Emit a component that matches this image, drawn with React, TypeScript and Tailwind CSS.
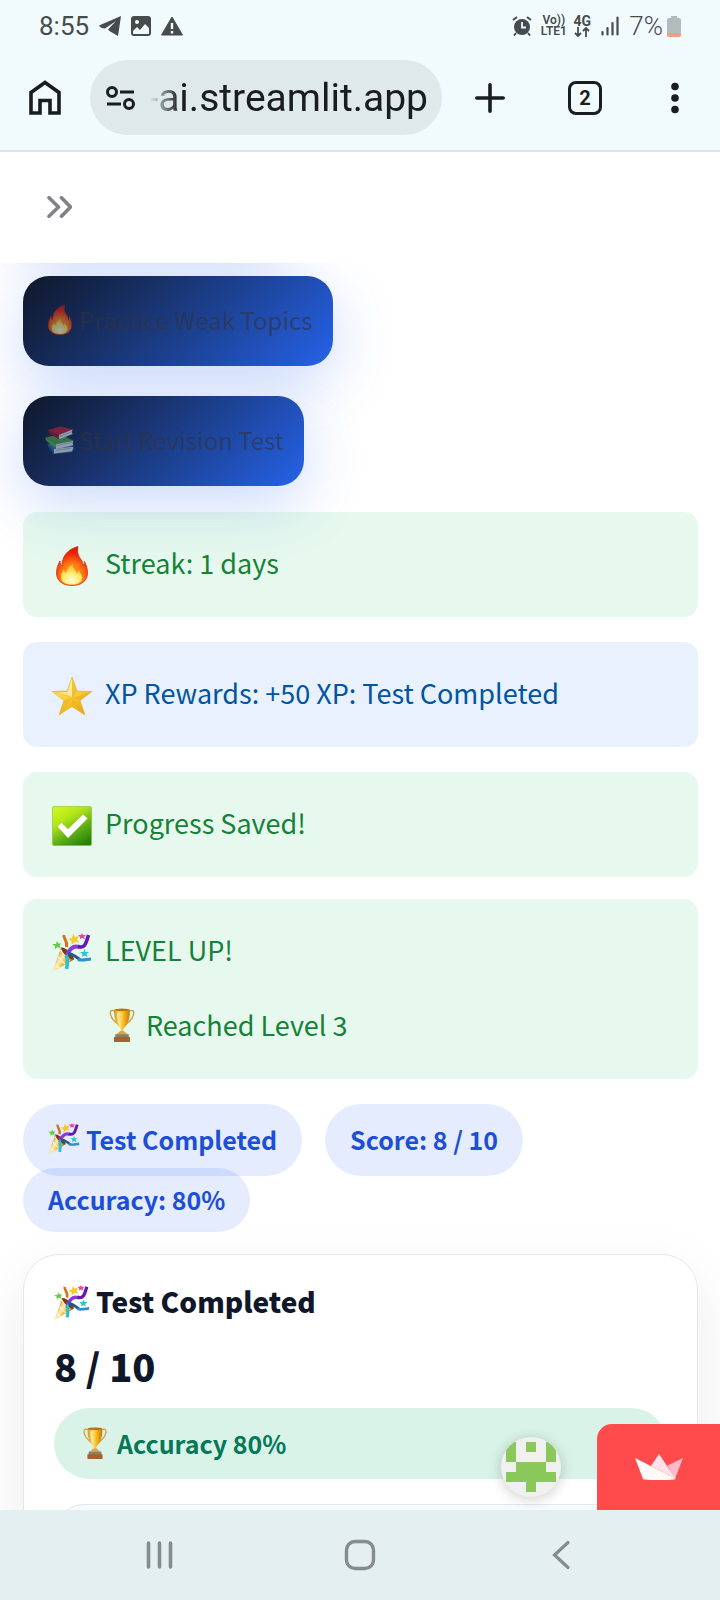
import type { ReactNode } from "react";

type IconProps = { className?: string };

/* emoji artwork */

function Fire({ className }: IconProps) {
  return (
    <svg viewBox="0 0 40 40" className={className} aria-hidden="true">
      <defs>
        <radialGradient id="fire-outer" cx="0.5" cy="0.8" r="0.8">
          <stop offset="0" stopColor="#ffb21f" />
          <stop offset="0.45" stopColor="#ff7a12" />
          <stop offset="0.75" stopColor="#ee2c0a" />
          <stop offset="1" stopColor="#cf1408" />
        </radialGradient>
        <radialGradient id="fire-inner" cx="0.5" cy="0.8" r="0.7">
          <stop offset="0" stopColor="#fffbd8" />
          <stop offset="0.5" stopColor="#ffed78" />
          <stop offset="1" stopColor="#ffc426" />
        </radialGradient>
      </defs>
      <path
        d="M26 .5c-1 6 0 9 3 13 1.500 2 2 4 2 6.500 1-1 1.500-3 1.500-4.500 2 4 3 8 3 11.500 0 8-6.500 12.500-15.500 12.500S4.500 35 4.500 27C4.500 22 6 19 8 15c0 3 1 4 2 5C10 10 16 3 26 .5z"
        fill="url(#fire-outer)"
        stroke="#d92a14"
        strokeWidth="0.8"
      />
      <path
        d="M21 18c-1 4 3 6 4 10 1-1 1-2 1-4 3 4 5 6 4 9-1 4-5 5.500-10 5.500S9 37 9 31c0-4 2-6 3-8 0 2 1 3 2 4 1-4 3-7 7-9z"
        fill="url(#fire-inner)"
      />
    </svg>
  );
}

function Books({ className }: IconProps) {
  return (
    <svg viewBox="0 0 40 40" className={className} aria-hidden="true">
      <path d="M3 25l24-2 12 8-3 5-25 3z" fill="#2d6fa8" />
      <path d="M12 32l26-3-2 6-24 3z" fill="#dfe6ee" />
      <path d="M3 25l9 11-1 3L4 29z" fill="#1d4f87" />
      <path d="M2 16l20-3 16 8-24 7z" fill="#4aa34a" />
      <path d="M14 26l24-5c-2 3-1 4 0 6l-23 5z" fill="#e8ecee" />
      <path d="M1 16l13 10c-1 3 0 4 1 6L3 22c-2-2-3-4-2-6z" fill="#5bb33f" />
      <path d="M4 7l16-5 18 4-19 8z" fill="#c51f38" />
      <path d="M19 13l18-7c-2 3-1 5 0 6l-18 7z" fill="#e8edf3" />
      <path d="M4 7l15 6c-2 3-1 4 0 6L7 12c-2-2-2-3-3-5z" fill="#a01430" />
      <path d="M20 15l16-6M15 28l21-5M14 34l21-3" stroke="#9ba9b8" strokeWidth="1" fill="none" />
    </svg>
  );
}

function Star({ className }: IconProps) {
  return (
    <svg viewBox="0 0 40 40" className={className} aria-hidden="true">
      <defs>
        <linearGradient id="star-fill" x1="0" y1="0" x2="0.6" y2="1">
          <stop offset="0" stopColor="#fff0a0" />
          <stop offset="0.5" stopColor="#fbd640" />
          <stop offset="1" stopColor="#e9a70c" />
        </linearGradient>
      </defs>
      <path
        d="M20 1l5 14 15 .5-12 9L33 39l-13-8.500L7 39l5-14.500-12-9L15 15z"
        fill="url(#star-fill)"
        stroke="#e0ac33"
        strokeWidth="0.6"
      />
      <path d="M20 1l5 14-5 7zM40 15.500l-12 9-8-2.500zM33 39l-13-8.500V22zM7 39l5-14.500 8-2.500zM0 15.500L15 15l5 7z" fill="#eeb31a" opacity="0.6" />
      <path d="M20 3l-4 13-12 .5 12 3 4 2z" fill="#fff6c4" opacity="0.65" />
    </svg>
  );
}

function CheckMark({ className }: IconProps) {
  return (
    <svg viewBox="0 0 40 40" className={className} aria-hidden="true">
      <defs>
        <linearGradient id="check-fill" x1="0.2" y1="0" x2="0.8" y2="1">
          <stop offset="0" stopColor="#ccf51c" />
          <stop offset="0.3" stopColor="#b2e51a" />
          <stop offset="0.65" stopColor="#5eae17" />
          <stop offset="1" stopColor="#24800c" />
        </linearGradient>
      </defs>
      <rect x="0.500" y="0.500" width="39" height="39" rx="1.500" fill="url(#check-fill)" stroke="#86bf2b" strokeWidth="0.6" />
      <path d="M5.500 20.500l4-3.500 6.500 6L31 8.500l4.500 4L16 32z" fill="#fff" />
    </svg>
  );
}

function Party({ className }: IconProps) {
  return (
    <svg viewBox="0 0 40 40" className={className} aria-hidden="true">
      <defs>
        <linearGradient id="party-cone" x1="0.1" y1="0.3" x2="0.8" y2="0.8">
          <stop offset="0" stopColor="#c98a24" />
          <stop offset="0.4" stopColor="#ffeeb4" />
          <stop offset="0.65" stopColor="#f0b53a" />
          <stop offset="1" stopColor="#8a4d10" />
        </linearGradient>
      </defs>
      <path d="M.5 39L9 14.500c3 1 11 8 13 12z" fill="url(#party-cone)" />
      <path d="M3.500 32l4 3M6 24l7 7M8.500 17l9 11" stroke="#fff6d8" strokeWidth="1.300" />
      <path d="M9 14.500c4-1 13 7 13 12-5 0-12-6-13-12z" fill="#7a3a12" />
      <path d="M12 2c-1 4 4 5 2.500 12" stroke="#d8701f" strokeWidth="3" fill="none" />
      <path d="M15 22C18 15 22 12.500 27 14" stroke="#8a3ad6" strokeWidth="4" fill="none" />
      <path d="M26 13.500C33 16 34 10 36.500 2" stroke="#6518b4" strokeWidth="3.600" fill="none" />
      <path d="M16 20.500c5 0 8 4 12 6" stroke="#175c96" strokeWidth="3" fill="none" />
      <path d="M26 26.500c4 1.500 8 0 13-.5" stroke="#2a92d0" strokeWidth="3" fill="none" />
      <path d="M14 22c2 4 2 8 .5 14" stroke="#2cc0cf" strokeWidth="3.600" fill="none" />
      <path d="M21 1l2 3 4-1-2 3.500 2 3-4-.5-3.500 2.500V8L16 6l4-1z" fill="#fbc827" />
      <path d="M30 0l1 2h3l-2 2 1 2-3-1-2 1v-2l-2-2h3z" fill="#e6489e" />
      <path d="M5 8l1.500 2.500h3l-2 2 1 3-3-1.500-2.500 2V13L0 11h4z" fill="#65cb3c" />
      <path d="M32.500 16l1 3H37l-2.500 2 1 3-3-1.500-2.500 1.500.5-3-2.500-2h3.500z" fill="#29c4cf" />
    </svg>
  );
}

function Trophy({ className }: IconProps) {
  return (
    <svg viewBox="0 0 40 40" className={className} aria-hidden="true">
      <defs>
        <linearGradient id="trophy-cup" x1="0" y1="0" x2="1" y2="0">
          <stop offset="0" stopColor="#d9920f" />
          <stop offset="0.35" stopColor="#ffe278" />
          <stop offset="0.6" stopColor="#f7b91f" />
          <stop offset="1" stopColor="#c2790a" />
        </linearGradient>
      </defs>
      <path
        d="M12 4C7 1 5 4 7 9c1 5 5 7 9 11M28 4c5-3 7 0 5 5-1 5-5 7-9 11"
        stroke="#d29a3a"
        strokeWidth="1.500"
        fill="none"
      />
      <path d="M11 2h18c1 9-2 17-6 21l-1.500 2v4h-3v-4L17 23C13 19 10 11 11 2z" fill="url(#trophy-cup)" />
      <ellipse cx="20" cy="2.200" rx="9" ry="1.600" fill="#b8740e" />
      <path d="M15 6c0 6 1 10 3 14" stroke="#fff3b5" strokeWidth="1.400" fill="none" />
      <path d="M18 27h4l6 5H12z" fill="#d5a64e" />
      <rect x="12" y="31" width="16" height="4" fill="#8a7f6c" />
      <rect x="10.500" y="34" width="19" height="6" rx="1" fill="#a8602f" />
    </svg>
  );
}

/* page parts */

function StatusBar() {
  return (
    <div className="flex h-[52px] items-center justify-between px-[39px] text-[#474b4b]">
      <div className="flex items-center gap-[10px]">
        <span className="text-[26px] leading-8">8:55</span>
        <svg viewBox="0 0 22 20" className="h-5 w-[22px]" fill="currentColor" aria-hidden="true">
          <path d="M22 0L0 9.500c1 2 3 3 6 3L17 5 9 13.500c1 1 2 2 4 3l6 3.500z" />
        </svg>
        <svg viewBox="0 0 20 20" className="size-5" aria-hidden="true">
          <rect width="20" height="20" rx="3" fill="currentColor" />
          <circle cx="6" cy="6" r="2" fill="#f1fafd" />
          <path d="M2 15l4-4 3 3 5-6 4 4v5c0 .8-.5 1-1 1H3c-.7 0-1-.4-1-1z" fill="#f1fafd" />
        </svg>
        <svg viewBox="0 0 22 20" className="h-5 w-[22px]" aria-hidden="true">
          <path d="M11 1l10.500 18H.5z" fill="currentColor" stroke="currentColor" strokeLinejoin="round" />
          <path d="M11 7v6M11 15v2.500" stroke="#f1fafd" strokeWidth="2.400" />
        </svg>
      </div>

      <div className="flex items-center">
        <svg viewBox="0 0 20 20" className="size-5" aria-hidden="true">
          <circle cx="10" cy="11" r="8" fill="currentColor" />
          <path d="M1 4l4-3M19 4l-4-3M4 17l-2 2.500M16 17l2 2.500" stroke="currentColor" strokeWidth="2" />
          <path d="M10 6v5.500h4" stroke="#f1fafd" strokeWidth="1.800" fill="none" />
        </svg>
        <div className="ml-2 w-[27px] text-center text-[12px] leading-[11px] font-semibold">
          <div>Vo))</div>
          <div>LTE1</div>
        </div>
        <div className="ml-[6px] flex w-[18px] flex-col items-center">
          <span className="text-[14px] leading-3 font-bold">4G</span>
          <svg viewBox="0 0 16 10" className="h-[10px] w-4" fill="none" stroke="currentColor" strokeWidth="1.800" aria-hidden="true">
            <path d="M4 0v9M1 6l3 3 3-3M12 10V1M9 4l3-3 3 3" />
          </svg>
        </div>
        <svg viewBox="0 0 18 20" className="ml-[10px] h-5 w-[18px]" stroke="currentColor" strokeWidth="2.200" strokeLinecap="round" aria-hidden="true">
          <path d="M1.500 16v2.500M6.500 12v6.500M11.500 7v11.500M16.500 1.500v17" />
        </svg>
        <span className="ml-[10px] text-[26px] leading-8 font-light">7%</span>
        <svg viewBox="0 0 14 21" className="ml-1 h-[21px] w-[14px]" aria-hidden="true">
          <path d="M4 0h6v2h2a2 2 0 012 2v13H0V4a2 2 0 012-2h2z" fill="#b3bcbd" />
          <path d="M0 17h14v2a2 2 0 01-2 2H2a2 2 0 01-2-2z" fill="#f39c80" />
        </svg>
      </div>
    </div>
  );
}

function BrowserBar() {
  return (
    <div className="flex items-center pt-2 pr-[41px] pb-[15px] pl-[29px] text-[#191d1e]">
      <button type="button" aria-label="Home">
        <svg viewBox="0 0 32 36" className="h-9 w-8" fill="none" stroke="currentColor" strokeWidth="3.600" aria-hidden="true">
          <path d="M2 33V12.500L16 2.500l14 10V33h-9V20.500H11V33z" />
        </svg>
      </button>
      <div className="ml-[29px] flex h-[75px] min-w-0 flex-1 items-center rounded-full bg-[#dfe9ea] pr-[14px] pl-4">
        <svg viewBox="0 0 30 24" className="h-6 w-[30px] shrink-0" fill="none" stroke="currentColor" strokeWidth="3" aria-hidden="true">
          <circle cx="6" cy="6" r="4.500" />
          <path d="M14 6h14M1 18h14" />
          <circle cx="23" cy="18" r="4.500" />
        </svg>
        <input
          type="text"
          aria-label="Address"
          defaultValue="-ai.streamlit.app"
          className="ml-[10px] h-12 w-full min-w-0 bg-transparent pt-[2px] text-right text-[39px] outline-none [mask-image:linear-gradient(to_right,transparent_4px,black_34px)]"
        />
      </div>
      <button type="button" aria-label="New tab" className="ml-[33px]">
        <svg viewBox="0 0 30 30" className="size-[30px]" stroke="currentColor" strokeWidth="3.600" strokeLinecap="round" aria-hidden="true">
          <path d="M15 1.800v26.400M1.800 15h26.400" />
        </svg>
      </button>
      <button
        type="button"
        aria-label="Open tabs"
        className="ml-[63px] flex size-[34px] items-center justify-center rounded-lg border-3 border-[#191d1e] text-xl leading-6 font-bold"
      >
        2
      </button>
      <button type="button" aria-label="Menu" className="ml-[69px]">
        <svg viewBox="0 0 8 32" className="h-8 w-2" fill="currentColor" aria-hidden="true">
          <circle cx="4" cy="4.500" r="3.800" />
          <circle cx="4" cy="16" r="3.800" />
          <circle cx="4" cy="27.500" r="3.800" />
        </svg>
      </button>
    </div>
  );
}

function ActionButton({ icon, label }: { icon: ReactNode; label: string }) {
  return (
    <button
      type="button"
      disabled
      className="flex h-[90px] items-center gap-1 rounded-[26px] bg-linear-135 from-[#0f172a] to-[#2563eb] pr-5 pb-[3px] pl-[22px] text-[24px] leading-8 text-[#31333f]/60 shadow-[0_18px_60px_rgba(37,99,235,0.24)]"
    >
      {icon}
      {label}
    </button>
  );
}

function Alert({ icon, tone, children }: { icon: ReactNode; tone: "success" | "info"; children: ReactNode }) {
  const colors =
    tone === "success" ? "bg-[#21c864]/11 text-[#158237]" : "bg-[#1c73f0]/10 text-[#0054a3]";

  return (
    <div role="alert" className={`flex gap-[13px] rounded-[14px] px-[29px] pt-[30px] pb-[34px] text-[27px] leading-[41px] ${colors}`}>
      <span className="mt-1 -mb-1 shrink-0">{icon}</span>
      <div>{children}</div>
    </div>
  );
}

const pill =
  "flex items-center gap-[6px] rounded-full bg-[#2563fa]/12 px-[25px] pb-[2px] text-[25px] leading-8 font-bold text-[#1d4ed8]";

function ResultCard() {
  return (
    <section className="mt-[22px] rounded-[36px] border border-[#e2e8f0] bg-white px-[30px] pt-[26px] pb-8 text-[#0f172a] shadow-[0_20px_60px_rgba(15,23,42,0.08)]">
      <h2 className="flex items-center gap-[6px] text-[28px] leading-10 font-black">
        <Party className="mt-1 size-9" />
        Test Completed
      </h2>
      <p className="mt-[21px] text-[38px] leading-12 font-black">8 / 10</p>
      <div className="mt-[18px] flex h-[71px] items-center gap-[6px] rounded-full bg-[#d9f3e9] px-[25px] pb-[2px] text-[25px] leading-8 font-bold text-[#047857]">
        <Trophy className="size-8" />
        Accuracy 80%
      </div>
      <div className="mt-[25px] h-40 rounded-[30px] border border-[#e2e8f0] bg-[#f8fafc]" />
    </section>
  );
}

function HostedBadges() {
  return (
    <div className="absolute right-0 bottom-0 flex items-end gap-9">
      <a href="#profile" aria-label="Creator profile" className="mb-[13px] size-[60px] overflow-hidden rounded-full bg-[#f0f0f0] shadow-[0_2px_14px_rgba(0,0,0,0.2)]">
        <svg viewBox="0 0 60 60" shapeRendering="crispEdges" fill="#8bc85c" aria-hidden="true">
          <path d="M5 5h10v20H5zM45 5h10v20H45zM25 5h10v10H25zM15 25h30v10h10v10H35v10H25V45H5V35h10z" />
        </svg>
      </a>
      <a href="#streamlit" aria-label="Hosted with Streamlit" className="flex h-[86px] w-[123px] items-center justify-center rounded-tl-[15px] bg-[#ff4b4b]">
        <svg viewBox="0 0 48 26" className="h-[26px] w-12" aria-hidden="true">
          <path d="M32.500 11.500L48 4l-8 21z" fill="#ffb9c8" />
          <path d="M16 12L24 0l16.500 24.500z" fill="#ffe1e8" />
          <path d="M0 4l40.500 20.500-1 1Q24 26.500 9 25.500L8 25z" fill="#fffafa" />
        </svg>
      </a>
    </div>
  );
}

function SystemNav() {
  return (
    <nav className="flex h-[90px] shrink-0 items-center justify-between bg-[#e4eff1] px-[20%] text-[#868b8d]">
      <button type="button" aria-label="Recent apps">
        <svg viewBox="0 0 32 32" className="size-8" stroke="currentColor" strokeWidth="3.600" strokeLinecap="round" aria-hidden="true">
          <path d="M4.500 4v24M15.500 4v24M26.500 4v24" />
        </svg>
      </button>
      <button type="button" aria-label="Home screen">
        <svg viewBox="0 0 32 32" className="size-8" fill="none" stroke="currentColor" strokeWidth="3.400" aria-hidden="true">
          <rect x="2.500" y="2.500" width="27" height="27" rx="8.500" />
        </svg>
      </button>
      <button type="button" aria-label="Back">
        <svg viewBox="0 0 32 32" className="size-8" fill="none" stroke="currentColor" strokeWidth="3.200" strokeLinecap="round" aria-hidden="true">
          <path d="M24 3.500L10.500 16 24 28.500" />
        </svg>
      </button>
    </nav>
  );
}

export default function App() {
  return (
    <div className="flex h-screen flex-col bg-white font-['Noto_Sans_CJK_SC','Open_Sans',sans-serif]">
      <header className="shrink-0 border-b-2 border-[#dbe6e8] bg-[#f1fafd] font-[Roboto,sans-serif]">
        <StatusBar />
        <BrowserBar />
      </header>

      <div className="flex h-[111px] shrink-0 items-center pb-[2px] pl-[47px]">
        <button type="button" aria-label="Open sidebar">
          <svg viewBox="0 0 25 22" className="h-[22px] w-[25px]" fill="none" stroke="#808189" strokeWidth="3.600" strokeLinecap="round" strokeLinejoin="round" aria-hidden="true">
            <path d="M2 1.800L11.500 11 2 20.200M14.500 1.800L23.500 11l-9 9.200" />
          </svg>
        </button>
      </div>

      <main className="relative min-h-0 flex-1 overflow-hidden">
        <div className="-mt-[107px] pr-[22px] pl-[23px]">
          {/* buttons, the first one is scrolled under the header */}
          <div className="flex flex-col items-start gap-[30px]">
            <div className="h-[90px] w-[260px] rounded-[26px] bg-[#2563eb] shadow-[0_18px_60px_rgba(37,99,235,0.24)]" />
            <ActionButton icon={<Fire className="size-[30px] opacity-60" />} label="Practice Weak Topics" />
            <ActionButton icon={<Books className="size-[30px] opacity-60" />} label="Start Revision Test" />
          </div>

          {/* alerts */}
          <div className="mt-[26px] flex flex-col gap-[25px]">
            <Alert tone="success" icon={<Fire className="size-10" />}>
              Streak: 1 days
            </Alert>
            <Alert tone="info" icon={<Star className="size-10" />}>
              XP Rewards: +50 XP: Test Completed
            </Alert>
            <Alert tone="success" icon={<CheckMark className="size-10" />}>
              Progress Saved!
            </Alert>
          </div>
          <div className="mt-[22px]">
            <Alert tone="success" icon={<Party className="size-10" />}>
              <p>LEVEL UP!</p>
              <p className="mt-[34px] flex items-center gap-[7px]">
                <Trophy className="size-[34px]" />
                Reached Level 3
              </p>
            </Alert>
          </div>

          {/* result pills */}
          <div className="mt-[25px] flex flex-wrap gap-x-[23px]">
            <span className={`${pill} h-[72px]`}>
              <Party className="size-8" />
              Test Completed
            </span>
            <span className={`${pill} h-[72px]`}>Score: 8 / 10</span>
          </div>
          <div className="-mt-2 flex">
            <span className={`${pill} h-16`}>Accuracy: 80%</span>
          </div>

          <ResultCard />
        </div>

        <HostedBadges />
      </main>

      <SystemNav />
    </div>
  );
}
